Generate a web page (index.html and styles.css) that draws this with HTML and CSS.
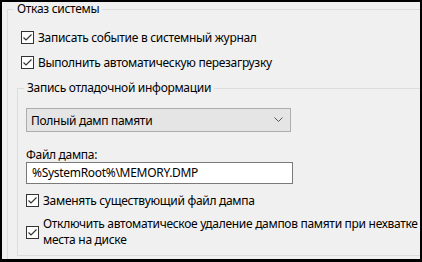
FILE: index.html
```html
<!DOCTYPE html>
<html lang="ru">
<head>
    <meta charset="UTF-8">
    <title>Отказ системы</title>
    <link rel="stylesheet" href="styles.css">
</head>
<body>

<div class="window">
    <fieldset class="group outer">
        <legend>Отказ системы</legend>

        <label class="check first">
            <span class="box"><svg width="11" height="11" viewBox="0 0 11 11"><path d="M1.5 5.5 L4 8 L9.5 2.5" /></svg></span>
            <span class="text">Записать событие в системный журнал</span>
        </label>
        <label class="check">
            <span class="box"><svg width="11" height="11" viewBox="0 0 11 11"><path d="M1.5 5.5 L4 8 L9.5 2.5" /></svg></span>
            <span class="text">Выполнить автоматическую перезагрузку</span>
        </label>

        <fieldset class="group inner">
            <legend>Запись отладочной информации</legend>

            <div class="select">
                <span>Полный дамп памяти</span>
                <svg width="9" height="6" viewBox="0 0 9 6"><path d="M0.5 0.5 L4.5 4.5 L8.5 0.5" /></svg>
            </div>

            <div class="field-label">Файл дампа:</div>
            <div class="input">%SystemRoot%\MEMORY.DMP</div>

            <label class="check">
                <span class="box"><svg width="11" height="11" viewBox="0 0 11 11"><path d="M1.5 5.5 L4 8 L9.5 2.5" /></svg></span>
                <span class="text">Заменять существующий файл дампа</span>
            </label>
            <label class="check multi">
                <span class="box"><svg width="11" height="11" viewBox="0 0 11 11"><path d="M1.5 5.5 L4 8 L9.5 2.5" /></svg></span>
                <span class="text">Отключить автоматическое удаление дампов памяти при нехватке места на диске</span>
            </label>
        </fieldset>
    </fieldset>
</div>

</body>
</html>
```

FILE: styles.css
```css
body {
    margin: 0;
    font-family: "Noto Sans", "Open Sans", sans-serif;
    font-size: 12px;
    letter-spacing: -0.3px;
    color: #000;
}
.window {
    width: 422px;
    height: 262px;
    box-sizing: border-box;
    border: solid #000;
    border-width: 2px 2px 3px 2px;
    background-color: #f0f0f0;
    overflow: hidden;
}
.group {
    border: 1px solid #dcdcdc;
    min-width: 0;
}
.group legend {
    line-height: 16px;
    padding: 0 3px;
}
.outer {
    margin: -1px -30px 0 5px;
    padding: 0 0 0 6px;
    height: 400px;
}
.inner {
    margin: 5px 0 0 3px;
    padding: 0 0 7px 8px;
}
.inner legend {
    margin-left: -2px;
}
.check {
    display: flex;
    align-items: center;
    height: 25px;
    padding-left: 7px;
}
.check.first {
    margin-top: 8px;
}
.inner .check {
    padding-left: 0;
}
.check.multi {
    height: auto;
    margin-top: 3px;
}
.check .text {
    line-height: 16px;
    max-width: 376px;
}
.box {
    width: 11px;
    height: 11px;
    border: 1px solid #333;
    background-color: #fff;
    margin-right: 4px;
    flex-shrink: 0;
    display: flex;
}
.box svg path {
    fill: none;
    stroke: #333;
    stroke-width: 1.2;
}
.select {
    margin-top: 12px;
    height: 22px;
    width: 252px;
    border: 1px solid #adadad;
    background-color: #e5e5e5;
    display: flex;
    align-items: center;
    justify-content: space-between;
    padding: 0 7px 0 4px;
}
.select svg path {
    fill: none;
    stroke: #555;
    stroke-width: 1;
}
.field-label {
    margin-top: 16px;
    line-height: 14px;
}
.input {
    width: 260px;
    height: 20px;
    line-height: 20px;
    border: 1px solid #7a7a7a;
    background-color: #fff;
    padding-left: 5px;
}
.input + .check {
    margin-top: 4px;
}
```
